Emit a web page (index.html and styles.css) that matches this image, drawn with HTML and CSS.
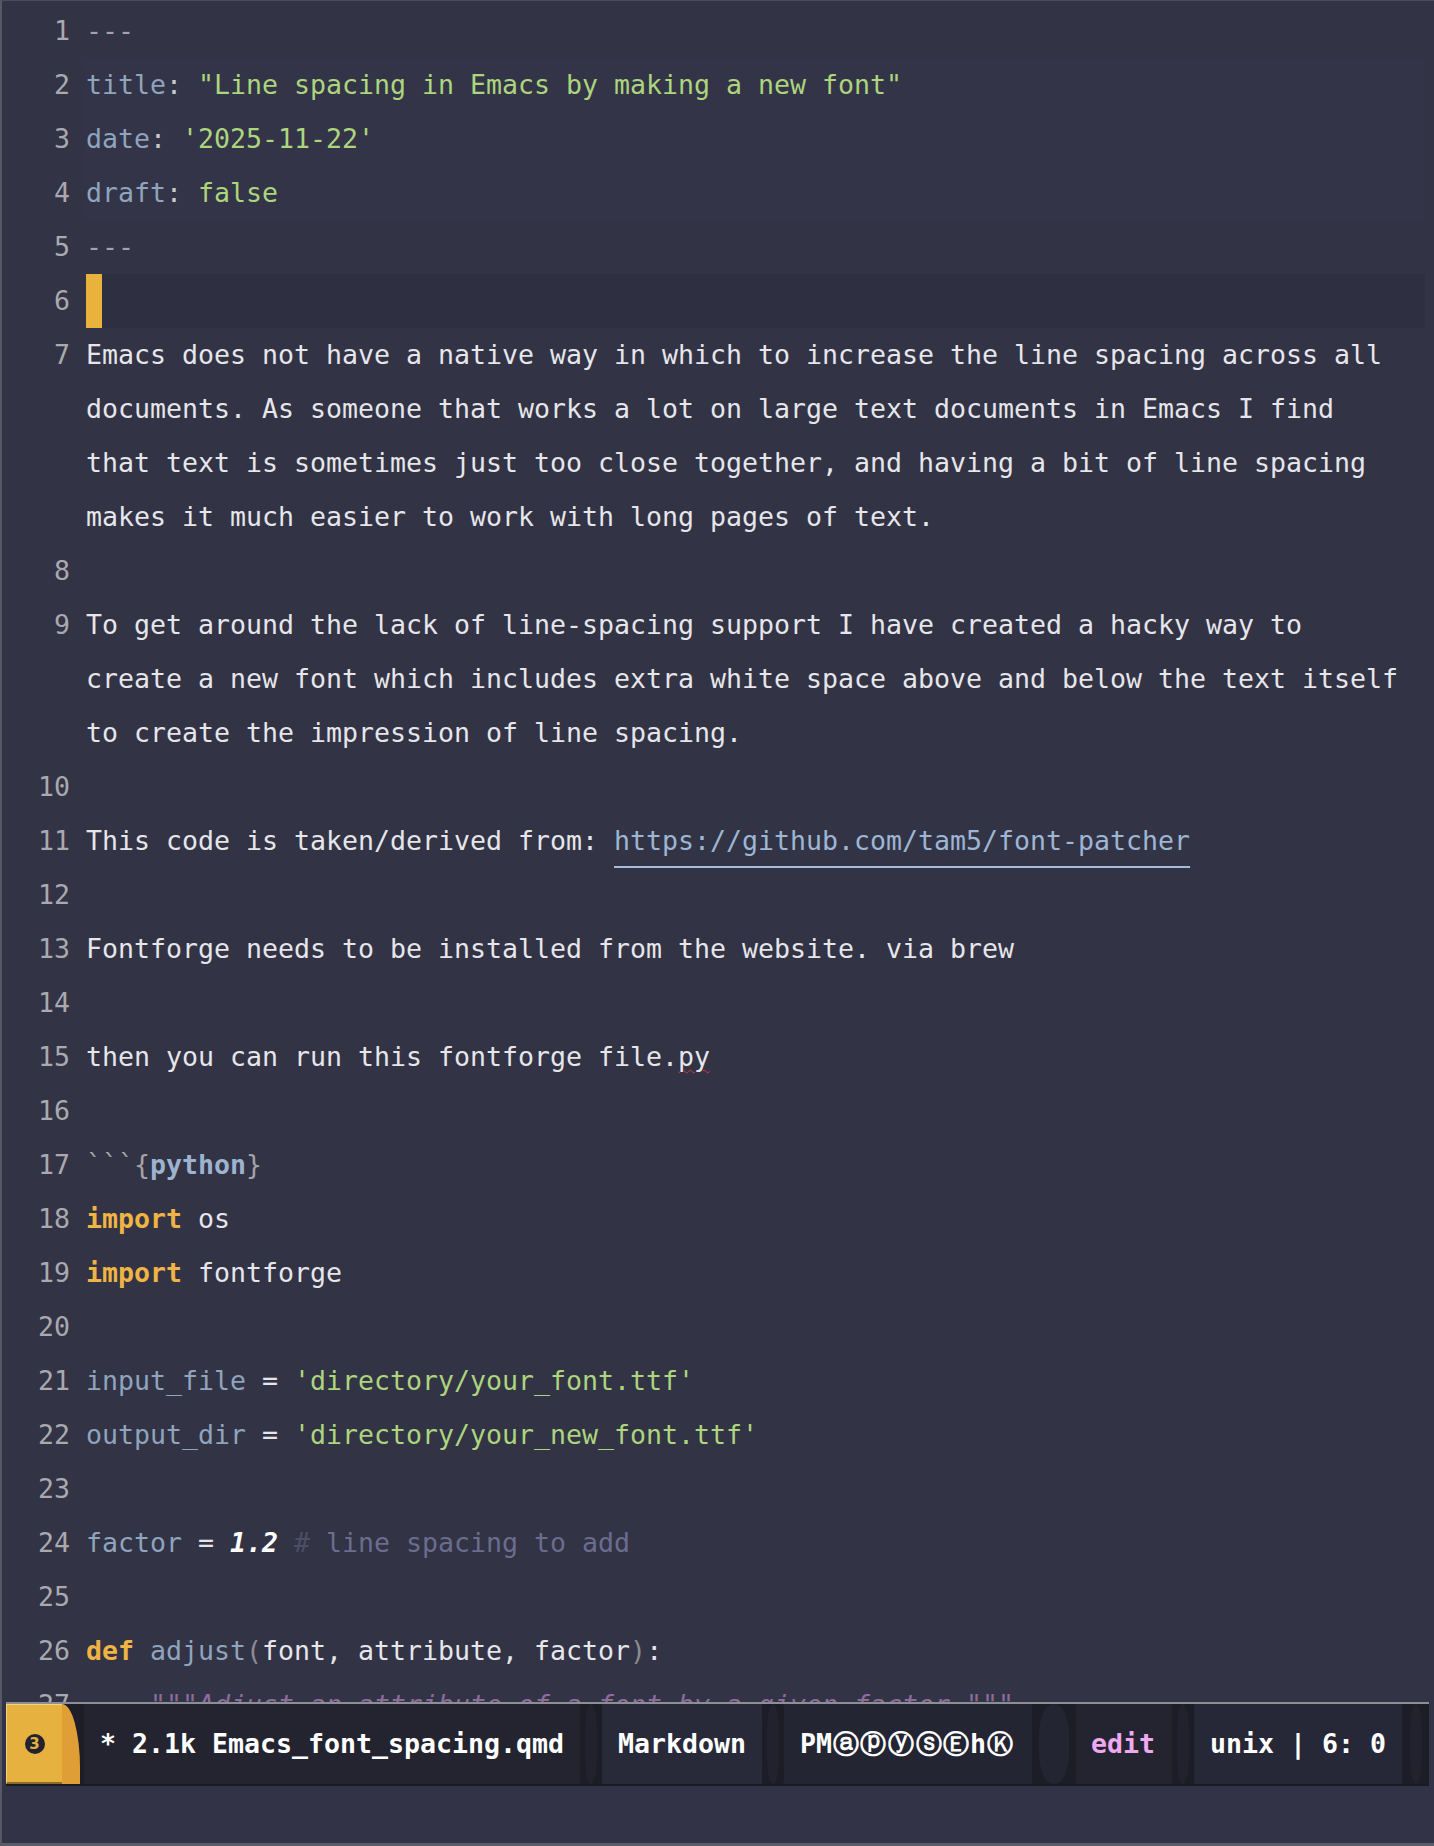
FILE: index.html
```html
<!DOCTYPE html>
<html lang="en">
<head>
<meta charset="utf-8">
<title>Emacs_font_spacing.qmd</title>
<link rel="stylesheet" href="styles.css">
</head>
<body>
<div class="window">
  <div class="editor">
    <div class="row"><span class="ln">1</span><span class="txt"><span class="dim">---</span></span></div>
    <div class="row fm"><span class="ln">2</span><span class="txt"><span class="key">title</span><span class="punc">:</span> <span class="str">"Line spacing in Emacs by making a new font"</span></span></div>
    <div class="row fm"><span class="ln">3</span><span class="txt"><span class="key">date</span><span class="punc">:</span> <span class="str">'2025-11-22'</span></span></div>
    <div class="row fm"><span class="ln">4</span><span class="txt"><span class="key">draft</span><span class="punc">:</span> <span class="str">false</span></span></div>
    <div class="row"><span class="ln">5</span><span class="txt"><span class="dim">---</span></span></div>
    <div class="row current"><span class="ln">6</span><span class="txt"><span class="cursor"></span></span></div>
    <div class="row"><span class="ln">7</span><span class="txt">Emacs does not have a native way in which to increase the line spacing across all</span></div>
    <div class="row"><span class="ln"></span><span class="txt">documents. As someone that works a lot on large text documents in Emacs I find</span></div>
    <div class="row"><span class="ln"></span><span class="txt">that text is sometimes just too close together, and having a bit of line spacing</span></div>
    <div class="row"><span class="ln"></span><span class="txt">makes it much easier to work with long pages of text.</span></div>
    <div class="row"><span class="ln">8</span><span class="txt"></span></div>
    <div class="row"><span class="ln">9</span><span class="txt">To get around the lack of line-spacing support I have created a hacky way to</span></div>
    <div class="row"><span class="ln"></span><span class="txt">create a new font which includes extra white space above and below the text itself</span></div>
    <div class="row"><span class="ln"></span><span class="txt">to create the impression of line spacing.</span></div>
    <div class="row"><span class="ln">10</span><span class="txt"></span></div>
    <div class="row"><span class="ln">11</span><span class="txt">This code is taken/derived from: <span class="link">https://github.com/tam5/font-patcher</span></span></div>
    <div class="row"><span class="ln">12</span><span class="txt"></span></div>
    <div class="row"><span class="ln">13</span><span class="txt">Fontforge needs to be installed from the website. via brew</span></div>
    <div class="row"><span class="ln">14</span><span class="txt"></span></div>
    <div class="row"><span class="ln">15</span><span class="txt">then you can run this fontforge file.<span class="spell">py</span></span></div>
    <div class="row"><span class="ln">16</span><span class="txt"></span></div>
    <div class="row"><span class="ln">17</span><span class="txt"><span class="dim">```{</span><span class="lang">python</span><span class="dim">}</span></span></div>
    <div class="row"><span class="ln">18</span><span class="txt"><span class="kw">import</span> os</span></div>
    <div class="row"><span class="ln">19</span><span class="txt"><span class="kw">import</span> fontforge</span></div>
    <div class="row"><span class="ln">20</span><span class="txt"></span></div>
    <div class="row"><span class="ln">21</span><span class="txt"><span class="var">input_file</span> = <span class="str">'directory/your_font.ttf'</span></span></div>
    <div class="row"><span class="ln">22</span><span class="txt"><span class="var">output_dir</span> = <span class="str">'directory/your_new_font.ttf'</span></span></div>
    <div class="row"><span class="ln">23</span><span class="txt"></span></div>
    <div class="row"><span class="ln">24</span><span class="txt"><span class="var">factor</span> = <span class="num">1.2</span> <span class="cmark">#</span><span class="comment"> line spacing to add</span></span></div>
    <div class="row"><span class="ln">25</span><span class="txt"></span></div>
    <div class="row"><span class="ln">26</span><span class="txt"><span class="kw">def</span> <span class="var">adjust</span><span class="paren">(</span>font, attribute, factor<span class="paren">)</span>:</span></div>
    <div class="row"><span class="ln">27</span><span class="txt"><span class="doc">    """Adjust an attribute of a font by a given factor."""</span></span></div>
  </div>
  <div class="modeline">
    <div class="badge"><span class="badge-num">3</span></div>
    <div class="badge-curve"></div>
    <div class="gap small"></div>
    <div class="seg seg-file">* 2.1k Emacs_font_spacing.qmd</div>
    <div class="gap"><span class="cap"></span></div>
    <div class="seg seg-mode">Markdown</div>
    <div class="gap"><span class="cap"></span></div>
    <div class="seg seg-minor">PM<span class="circ">ⓐ</span><span class="circ">ⓟ</span><span class="circ">ⓨ</span><span class="circ">ⓢ</span><span class="circ">Ⓔ</span>h<span class="circ">Ⓚ</span></div>
    <div class="gap wide"><span class="cap pill"></span></div>
    <div class="seg seg-edit">edit</div>
    <div class="gap"><span class="cap"></span></div>
    <div class="seg seg-pos">unix | 6: 0</div>
    <div class="gap end"><span class="cap"></span></div>
  </div>
  <div class="echo"></div>
</div>
</body>
</html>
```
FILE: styles.css
```css
html, body {
  margin: 0;
  padding: 0;
  background: #323345;
}

.window {
  width: 1434px;
  height: 1846px;
  box-sizing: border-box;
  border-top: 1px solid #4b4c59;
  border-left: 2px solid #575864;
  border-bottom: 3px solid #5a5b66;
  background: #323345;
  display: flex;
  flex-direction: column;
  font-family: "DejaVu Sans Mono", "Liberation Mono", monospace;
  font-size: 26.58px;
  color: #e6e6ea;
}

.editor {
  height: 1701px;
  flex: none;
  overflow: hidden;
  padding-top: 3px;
  box-sizing: border-box;
}

.row {
  display: flex;
  height: 54px;
  line-height: 54px;
}

.ln {
  flex: none;
  width: 68px;
  text-align: right;
  color: #a9a9af;
}

.txt {
  flex: none;
  width: 1339px;
  margin-left: 16px;
  white-space: pre;
  overflow: hidden;
}

.fm .txt { background: #333447; }
.current .txt { background: #2e2f40; }

.cursor {
  display: inline-block;
  width: 16px;
  height: 54px;
  vertical-align: top;
  background: #e8b23c;
}

.dim { color: #a3a3a9; }
.key, .var { color: #8fa4bd; }
.punc { color: #c9c9ce; }
.str { color: #acd57e; }
.lang { color: #9db3cf; font-weight: bold; }
.kw { color: #f0b445; font-weight: bold; }
.num { color: #ffffff; font-weight: bold; font-style: italic; }
.cmark { color: #4c4e66; }
.comment { color: #6b6d8e; }
.paren { color: #8b8b92; }
.doc { color: #8c6c9e; font-style: italic; }

.link {
  color: #9db6d4;
  text-decoration: underline;
  text-decoration-color: #a6bcd8;
  text-decoration-thickness: 2px;
  text-underline-offset: 16px;
}

.spell {
  text-decoration: underline wavy #e0332e;
  text-decoration-thickness: 1px;
  text-underline-offset: 3px;
}

/* mode line */
.modeline {
  flex: none;
  margin-left: 4px;
  width: 1423px;
  height: 84px;
  box-sizing: border-box;
  border-top: 2px solid #8e8e95;
  border-bottom: 2px solid #191a22;
  background: #1d1e28;
  display: flex;
  align-items: stretch;
  color: #ffffff;
  font-weight: bold;
}

.badge {
  flex: none;
  width: 56px;
  box-sizing: border-box;
  background: #e6b13f;
  border-left: 1px solid #f4d17c;
  border-top: 1px solid #f4d17c;
  border-bottom: 2px solid #8d6b2c;
  display: flex;
  align-items: center;
  justify-content: center;
}

.badge-num {
  width: 20px;
  height: 20px;
  border-radius: 50%;
  background: #22232e;
  color: #e6b13f;
  font-family: "DejaVu Sans", sans-serif;
  font-size: 15px;
  line-height: 20px;
  text-align: center;
}

.badge-curve {
  flex: none;
  width: 18px;
  background: #e09f36;
  border-radius: 0 18px 0 0 / 0 64px 0 0;
}

.gap {
  flex: none;
  width: 22px;
  display: flex;
  justify-content: center;
  align-items: stretch;
  background: #1c1d27;
}

.gap.small { width: 4px; }
.gap.wide { width: 44px; }
.gap.end { width: 27px; }

.cap {
  width: 12px;
  background: #21222d;
  border-radius: 6px / 24px;
}

.cap.pill {
  width: 30px;
  background: #242533;
  border-radius: 15px / 30px;
}

.seg {
  flex: none;
  box-sizing: border-box;
  display: flex;
  align-items: center;
  padding: 0 16px;
  white-space: pre;
  line-height: 1;
}

.seg-file { width: 496px; background: #23242f; }
.seg-mode { width: 160px; background: #282939; }
.seg-minor { width: 248px; background: #242532; }
.seg-edit { width: 96px; background: #232430; color: #f0a9ef; padding-left: 15px; }
.seg-pos { width: 208px; background: #262737; }

.circ {
  display: inline-block;
  width: 27.6px;
  text-align: center;
  font-family: "DejaVu Sans", sans-serif;
  font-weight: bold;
  font-size: 26px;
}

.echo {
  flex: 1;
  background: #323346;
}
```
